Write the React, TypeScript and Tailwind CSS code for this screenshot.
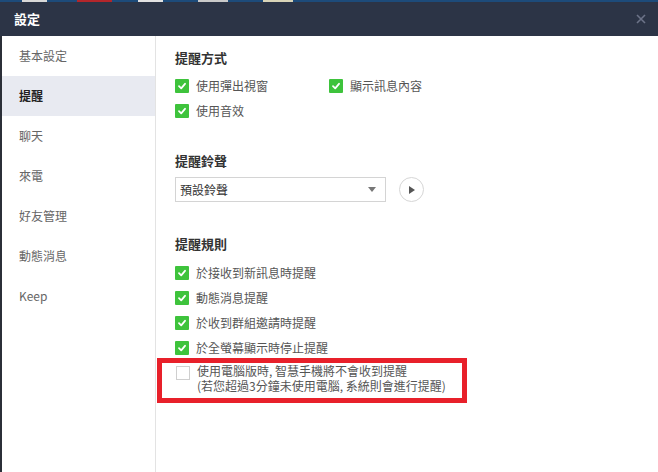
import { useState } from "react";

const font = { fontFamily: '"Noto Sans CJK TC", "Noto Sans", sans-serif' };

function Check({ on }: { on: boolean }) {
  return on ? (
    <span className="flex h-[14px] w-[14px] shrink-0 items-center justify-center rounded-[1px] bg-[#3ec33c]">
      <svg width="10" height="10" viewBox="0 0 10 10">
        <path d="M2 5.2 L4.2 7.3 L8 2.8" fill="none" stroke="white" strokeWidth="1.8" strokeLinecap="round" strokeLinejoin="round" />
      </svg>
    </span>
  ) : (
    <span className="block h-[14px] w-[14px] shrink-0 border border-[#cfcfcf] bg-white" />
  );
}

function Row({ label, on = true }: { label: string; on?: boolean }) {
  return (
    <div className="flex h-[25px] items-center gap-[7px]">
      <Check on={on} />
      <span className="text-[12px] text-[#555]">{label}</span>
    </div>
  );
}

const menu = ["基本設定", "提醒", "聊天", "來電", "好友管理", "動態消息", "Keep"];

export default function App() {
  const [active, setActive] = useState("提醒");

  return (
    <div className="flex h-[472px] w-[658px] flex-col overflow-hidden bg-white" style={font}>
      {/* strip of the window behind */}
      <div className="flex h-[2px] bg-[#1d4b7a]">
        <span className="ml-[22px] w-[25px] bg-[#d8d8d8]" />
        <span className="ml-[30px] w-[35px] bg-[#b3262b]" />
        <span className="ml-[26px] w-[25px] bg-[#e2e2e2]" />
        <span className="ml-[35px] w-[30px] bg-[#c9c9c9]" />
        <span className="ml-[35px] w-[30px] bg-[#d9d4b8]" />
      </div>

      {/* title bar */}
      <div className="flex h-[34px] items-center justify-between bg-[#2c3446] pl-[14px] pr-[12px]">
        <span className="text-[13px] font-bold text-white">設定</span>
        <svg width="10" height="10" viewBox="0 0 10 10">
          <path d="M1 1 L9 9 M9 1 L1 9" stroke="#6c7388" strokeWidth="1.6" />
        </svg>
      </div>

      <div className="flex flex-1">
        {/* sidebar */}
        <div className="w-[156px] shrink-0 border-l-2 border-r border-l-[#2b2f38] border-r-[#e3e3e3]">
          {menu.map((m) => (
            <div
              key={m}
              onClick={() => setActive(m)}
              className={
                active === m
                  ? "flex h-[40px] items-center bg-[#e8eaf1] pl-[17px] text-[12px] font-bold text-[#222]"
                  : "flex h-[40px] items-center pl-[17px] text-[12px] text-[#666]"
              }
            >
              {m}
            </div>
          ))}
        </div>

        {/* content */}
        <div className="flex-1 pl-[19px] pt-[12px]">
          <div className="flex h-[20px] items-center text-[13px] font-bold text-[#333]">提醒方式</div>
          <div className="mt-[5px] grid w-[300px] grid-cols-[154px_1fr]">
            <Row label="使用彈出視窗" />
            <Row label="顯示訊息內容" />
            <Row label="使用音效" />
          </div>

          <div className="mt-[28px] flex h-[20px] items-center text-[13px] font-bold text-[#333]">提醒鈴聲</div>
          <div className="mt-[6px] flex items-center gap-[13px]">
            <div className="flex h-[25px] w-[211px] items-center justify-between border border-[#d4d4d4] pl-[4px] pr-[9px]">
              <span className="text-[12px] text-[#333]">預設鈴聲</span>
              <svg width="8" height="5" viewBox="0 0 8 5">
                <path d="M0 0 H8 L4 5 Z" fill="#777" />
              </svg>
            </div>
            <div className="flex h-[25px] w-[25px] items-center justify-center rounded-full border border-[#d6d6d6]">
              <svg width="6" height="8" viewBox="0 0 6 8" className="ml-[1px]">
                <path d="M0 0 L6 4 L0 8 Z" fill="#555" />
              </svg>
            </div>
          </div>

          <div className="mt-[32px] flex h-[20px] items-center text-[13px] font-bold text-[#333]">提醒規則</div>
          <div className="mt-[6px]">
            <Row label="於接收到新訊息時提醒" />
            <Row label="動態消息提醒" />
            <Row label="於收到群組邀請時提醒" />
            <Row label="於全螢幕顯示時停止提醒" />
          </div>

          <div className="ml-[-18px] mt-[-2px] flex h-[45px] w-[310px] items-start gap-[7px] border-[5px] border-[#e8202a] pl-[14px] pt-[3px]">
            <Check on={false} />
            <div className="mt-[-3px] text-[12px] leading-[15px] text-[#555]">
              <div>使用電腦版時, 智慧手機將不會收到提醒</div>
              <div>(若您超過3分鐘未使用電腦, 系統則會進行提醒)</div>
            </div>
          </div>
        </div>
      </div>
    </div>
  );
}
